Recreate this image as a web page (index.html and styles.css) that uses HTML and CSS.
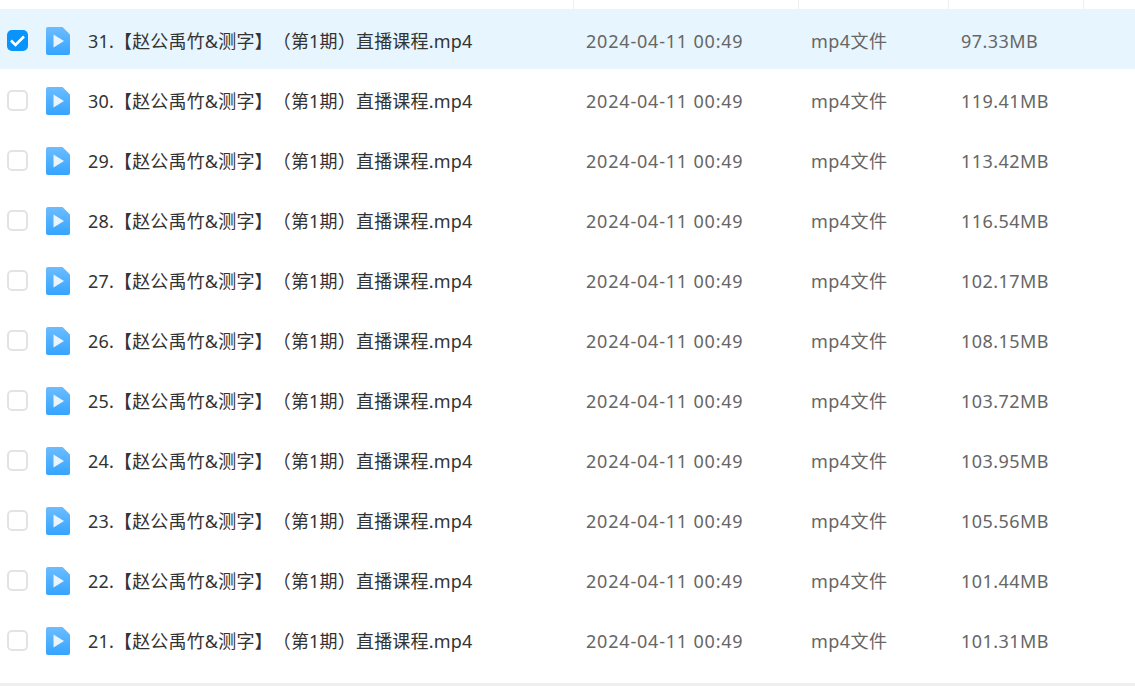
FILE: index.html
```html
<!DOCTYPE html>
<html lang="zh-CN">
<head>
<meta charset="utf-8">
<title>文件列表</title>
<link rel="stylesheet" href="styles.css">
</head>
<body>
<svg class="defs" width="0" height="0" aria-hidden="true">
  <defs>
    <linearGradient id="fg" x1="0" y1="0" x2="0" y2="1"><stop offset="0" stop-color="#6cbcff"/><stop offset="1" stop-color="#35a4ff"/></linearGradient>
    <symbol id="video" viewBox="0 0 24 28">
      <path d="M2 0H16.500L24 7.500V26a2 2 0 0 1-2 2H2a2 2 0 0 1-2-2V2a2 2 0 0 1 2-2Z" fill="url(#fg)"/>
      <path d="M7.500 7.500L18 14L7.500 20.500Z" fill="#e8f5ff"/>
    </symbol>
  </defs>
</svg>
<div class="head"><span class="hc hc-name"></span><span class="hc hc-time"></span><span class="hc hc-type"></span><span class="hc hc-size"></span><span class="hc hc-end"></span></div>
<div class="list">
  <div class="row selected"><span class="check on"><svg viewBox="0 0 21 21" width="21" height="21"><path d="M4 10.500L8.500 15L17 6.500" fill="none" stroke="#fff" stroke-width="2.600"/></svg></span><svg class="icon"><use href="#video"/></svg><span class="name">31.【赵公禹竹&amp;测字】（第1期）直播课程.mp4</span><span class="time">2024-04-11 00:49</span><span class="type">mp4文件</span><span class="size">97.33MB</span></div>
  <div class="row"><span class="check"></span><svg class="icon"><use href="#video"/></svg><span class="name">30.【赵公禹竹&amp;测字】（第1期）直播课程.mp4</span><span class="time">2024-04-11 00:49</span><span class="type">mp4文件</span><span class="size">119.41MB</span></div>
  <div class="row"><span class="check"></span><svg class="icon"><use href="#video"/></svg><span class="name">29.【赵公禹竹&amp;测字】（第1期）直播课程.mp4</span><span class="time">2024-04-11 00:49</span><span class="type">mp4文件</span><span class="size">113.42MB</span></div>
  <div class="row"><span class="check"></span><svg class="icon"><use href="#video"/></svg><span class="name">28.【赵公禹竹&amp;测字】（第1期）直播课程.mp4</span><span class="time">2024-04-11 00:49</span><span class="type">mp4文件</span><span class="size">116.54MB</span></div>
  <div class="row"><span class="check"></span><svg class="icon"><use href="#video"/></svg><span class="name">27.【赵公禹竹&amp;测字】（第1期）直播课程.mp4</span><span class="time">2024-04-11 00:49</span><span class="type">mp4文件</span><span class="size">102.17MB</span></div>
  <div class="row"><span class="check"></span><svg class="icon"><use href="#video"/></svg><span class="name">26.【赵公禹竹&amp;测字】（第1期）直播课程.mp4</span><span class="time">2024-04-11 00:49</span><span class="type">mp4文件</span><span class="size">108.15MB</span></div>
  <div class="row"><span class="check"></span><svg class="icon"><use href="#video"/></svg><span class="name">25.【赵公禹竹&amp;测字】（第1期）直播课程.mp4</span><span class="time">2024-04-11 00:49</span><span class="type">mp4文件</span><span class="size">103.72MB</span></div>
  <div class="row"><span class="check"></span><svg class="icon"><use href="#video"/></svg><span class="name">24.【赵公禹竹&amp;测字】（第1期）直播课程.mp4</span><span class="time">2024-04-11 00:49</span><span class="type">mp4文件</span><span class="size">103.95MB</span></div>
  <div class="row"><span class="check"></span><svg class="icon"><use href="#video"/></svg><span class="name">23.【赵公禹竹&amp;测字】（第1期）直播课程.mp4</span><span class="time">2024-04-11 00:49</span><span class="type">mp4文件</span><span class="size">105.56MB</span></div>
  <div class="row"><span class="check"></span><svg class="icon"><use href="#video"/></svg><span class="name">22.【赵公禹竹&amp;测字】（第1期）直播课程.mp4</span><span class="time">2024-04-11 00:49</span><span class="type">mp4文件</span><span class="size">101.44MB</span></div>
  <div class="row"><span class="check"></span><svg class="icon"><use href="#video"/></svg><span class="name">21.【赵公禹竹&amp;测字】（第1期）直播课程.mp4</span><span class="time">2024-04-11 00:49</span><span class="type">mp4文件</span><span class="size">101.31MB</span></div>
</div>
<div class="foot"></div>
</body>
</html>
```

FILE: styles.css
```css
* { box-sizing: border-box; }
html, body { margin: 0; height: 100%; overflow: hidden; background: #fff; }
body { font-family: "Noto Sans", "Noto Sans CJK SC", sans-serif; font-size: 18px; }
.defs { display: block; height: 0; }
.head { display: flex; height: 10px; border-bottom: 1px solid #f0f1f3; }
.hc { display: block; height: 100%; border-right: 1px solid #eeeff1; }
.hc-name { width: 574px; }
.hc-time { width: 225px; }
.hc-type { width: 150px; }
.hc-size { width: 135px; }
.hc-end { flex: 1; border-right: 0; }
.list { display: flex; flex-direction: column; }
.row { display: flex; align-items: center; height: 60px; padding: 1px 0 0 7px; color: #666; line-height: 24px; }
.selected { background: #e7f5fe; box-shadow: inset 0 -1px 0 #fff; }
.check { width: 21px; height: 21px; flex: none; border: 2px solid #e3e3e3; border-radius: 5px; background: #fff; }
.check.on { border: 0; background: #0a94fb; }
.check svg { display: block; }
.icon { width: 24px; height: 28px; flex: none; margin: 0 1px 0 18px; }
.name { width: 498px; flex: none; margin-left: 17px; color: #333; white-space: nowrap; letter-spacing: 0.18px; text-spacing-trim: space-all; font-feature-settings: "chws" 0; }
.time { width: 225px; flex: none; letter-spacing: 0.8px; }
.type { width: 150px; flex: none; letter-spacing: 0.45px; }
.size { flex: none; letter-spacing: 0.45px; }
.foot { height: 3px; margin-top: 13px; background: #efefef; }
```
